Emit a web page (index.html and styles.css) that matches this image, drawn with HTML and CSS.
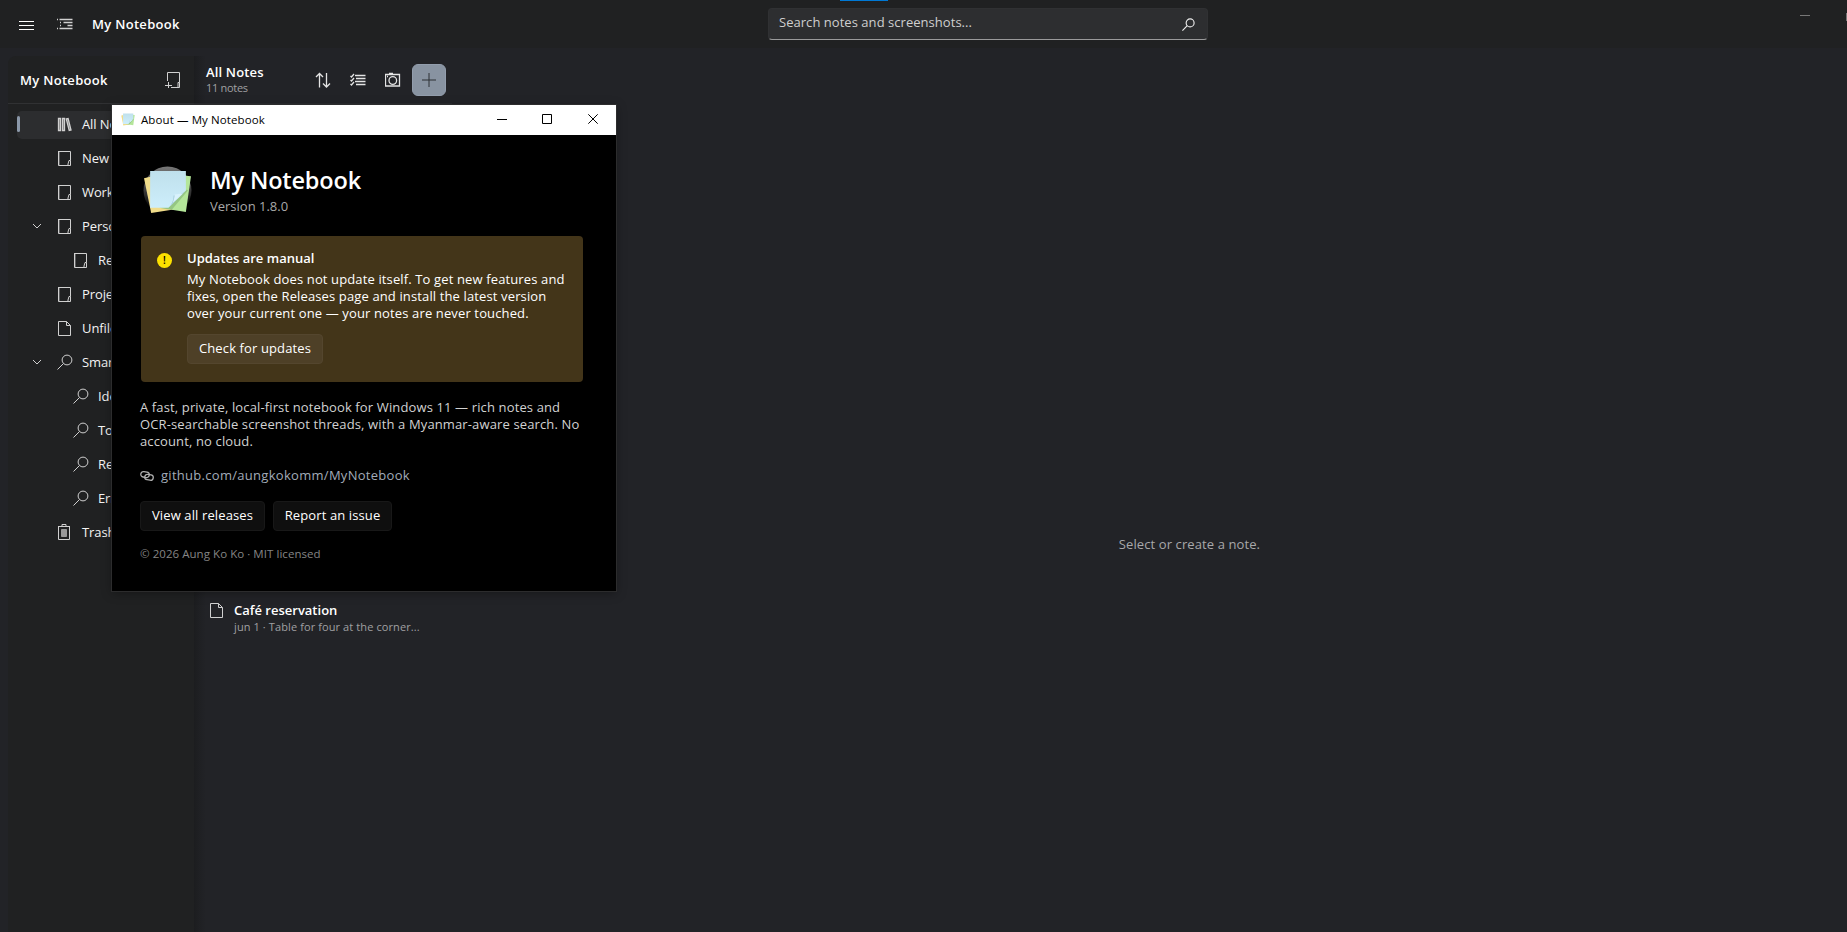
FILE: index.html
```html
<!DOCTYPE html>
<html lang="en">
<head>
    <meta charset="UTF-8">
    <meta name="viewport" content="width=device-width, initial-scale=1.0">
    <title>My Notebook</title>
    <link rel="stylesheet" href="styles.css">
</head>
<body>
    <svg class="sprite" width="0" height="0">
        <defs>
            <linearGradient id="disc" x1="0" y1="0" x2="0" y2="1"><stop offset="0" stop-color="#777"/><stop offset=".5" stop-color="#3a3a3a"/><stop offset=".9" stop-color="#000"/></linearGradient>
            <linearGradient id="sheet" x1="0" y1="0" x2="0" y2="1"><stop offset="0" stop-color="#bfe0ec"/><stop offset="1" stop-color="#cdeefb"/></linearGradient>
        </defs>
        <symbol id="book" viewBox="0 0 16 16"><path d="M1.500 1.500h12v9M1.500 1v14.500h9.500M13.500 10.500v5h-2.500v-1.500l1-3.500z"/><path d="M2.500 2v13" stroke-opacity=".35"/></symbol>
        <symbol id="page" viewBox="0 0 16 16"><path d="M1.500 1.500v14h12V5.500L9.500 1.500zM9.500 1.500v4h4"/></symbol>
        <symbol id="search" viewBox="0 0 16 16"><circle cx="10" cy="6" r="4.900"/><path d="M6.500 9.500L.5 15.500"/></symbol>
        <symbol id="chevron" viewBox="0 0 10 10"><path d="M1 3l4 4 4-4"/></symbol>
        <symbol id="notes" viewBox="0 0 48 48">
            <path d="M1 12l8-2 24 32-25 4z" fill="#f0dc8a"/>
            <path d="M38 9l9 1-5 35-26-4z" fill="#b4e69a"/>
            <path d="M44 24L28 43l-12-2 10-1 17-17z" fill="#5d8a5a" fill-opacity=".35"/>
            <path d="M7 5h35v19L25 41H7z" fill="url(#sheet)"/>
            <path d="M42 24L25 41c3-3 5-7 5-12 5 0 9-2 12-5z" fill="#a3cbd8"/>
            <path d="M31 28l8-1c-3 3-7 7-10 9 1-2 2-5 2-8z" fill="#d9f2fc"/>
        </symbol>
    </svg>

    <header class="titlebar">
        <svg class="icon menu" viewBox="0 0 16 12"><path d="M0 1.500h15M0 5.500h15M0 9.500h15"/></svg>
        <svg class="icon outline" viewBox="0 0 16 12"><path d="M2.500 1.500h13M6.500 4.500h9M10.500 7.500h5M2.500 10.500h13M0 1.500h1M0 10.500h1M3 4.500h1M3 7.500h1"/></svg>
        <span class="app-name">My Notebook</span>
        <div class="search">
            <span class="search-text">Search notes and screenshots...</span>
            <svg class="icon search-icon"><use href="#search"/></svg>
        </div>
        <span class="snap"></span>
        <span class="min"></span>
        <span class="max"></span>
    </header>

    <main class="content">
        <nav class="sidebar">
            <div class="side-head">
                <span class="side-title">My Notebook</span>
                <svg class="icon" viewBox="0 0 16 16"><path d="M2.500 9V.5h12v10M6 15.500h8.500v-5h-1.500v5M3.500 10v6M0 13.500h7"/></svg>
            </div>
            <div class="row selected"><span class="marker"></span><span class="chev"></span><svg class="icon library" viewBox="0 0 16 16"><path d="M1.500 2.500h2v12h-2zM5.500 2.500h2v12h-2zM9.300 3l1.800-.5 2.900 11.500-1.800.5z"/></svg><span class="label">All Notes</span></div>
            <div class="row"><span class="chev"></span><svg class="icon"><use href="#book"/></svg><span class="label">New</span></div>
            <div class="row"><span class="chev"></span><svg class="icon"><use href="#book"/></svg><span class="label">Work</span></div>
            <div class="row"><svg class="chev"><use href="#chevron"/></svg><svg class="icon"><use href="#book"/></svg><span class="label">Personal</span></div>
            <div class="row child"><span class="chev"></span><svg class="icon"><use href="#book"/></svg><span class="label">Recipes</span></div>
            <div class="row"><span class="chev"></span><svg class="icon"><use href="#book"/></svg><span class="label">Projects</span></div>
            <div class="row"><span class="chev"></span><svg class="icon"><use href="#page"/></svg><span class="label">Unfiled</span></div>
            <div class="row"><svg class="chev"><use href="#chevron"/></svg><svg class="icon"><use href="#search"/></svg><span class="label">Smart</span></div>
            <div class="row child"><span class="chev"></span><svg class="icon"><use href="#search"/></svg><span class="label">Ideas</span></div>
            <div class="row child"><span class="chev"></span><svg class="icon"><use href="#search"/></svg><span class="label">To do</span></div>
            <div class="row child"><span class="chev"></span><svg class="icon"><use href="#search"/></svg><span class="label">Recent</span></div>
            <div class="row child"><span class="chev"></span><svg class="icon"><use href="#search"/></svg><span class="label">Errors</span></div>
            <div class="row"><span class="chev"></span><svg class="icon" viewBox="0 0 16 16"><path d="M1 2.500h12M5 2V.5h4V2M1.500 3v12.500h11V3"/><path d="M4.500 5.500h5v7h-5z" fill="#999" stroke="#999"/></svg><span class="label">Trash</span></div>
        </nav>

        <section class="notes">
            <div class="notes-head">
                <div class="notes-title">
                    <h2>All Notes</h2>
                    <p>11 notes</p>
                </div>
                <svg class="icon" viewBox="0 0 16 16"><path d="M4.500 15.500V1.500M1 5l3.500-3.500L8 5M11.500 1v14M8 11.500l3.500 3.500 3.500-3.500"/></svg>
                <svg class="icon" viewBox="0 0 16 16"><path d="M5 3.500h10.500M6 6.500h9.500M5 9.500h10.500M6 12.500h9.500M.5 4l1 1L4 2M.5 8l1 1L4 6M.5 12l1 1L4 10"/></svg>
                <svg class="icon" viewBox="0 0 16 16"><path d="M.5 2.500h14v11.500H.5zM2 4.500h1M4 1.500h4"/><circle cx="7.800" cy="8.500" r="3.800"/></svg>
                <button class="add"><svg viewBox="0 0 14 14"><path d="M7 0v14M0 7h14"/></svg></button>
            </div>
            <div class="note">
                <svg class="icon"><use href="#page"/></svg>
                <div>
                    <h3>Café reservation</h3>
                    <p>jun 1 · Table for four at the corner...</p>
                </div>
            </div>
        </section>

        <section class="editor"><p class="empty">Select or create a note.</p></section>
    </main>

    <div class="dialog">
        <div class="dialog-bar">
            <svg class="small-logo"><use href="#notes"/></svg>
            <span class="dialog-title">About — My Notebook</span>
            <svg class="win-btn" viewBox="0 0 10 10"><path d="M0 5.500h10"/></svg>
            <svg class="win-btn" viewBox="0 0 10 10"><path d="M.5.5h9v9h-9z"/></svg>
            <svg class="win-btn" viewBox="0 0 10 10"><path d="M.3.3l9.400 9.400M9.700.3L.3 9.700"/></svg>
        </div>
        <div class="dialog-body">
            <div class="brand">
                <svg class="logo" viewBox="0 0 48 48"><circle cx="24" cy="24" r="23.500" fill="url(#disc)"/><use href="#notes"/></svg>
                <div>
                    <h1>My Notebook</h1>
                    <p class="version">Version 1.8.0</p>
                </div>
            </div>
            <div class="warning">
                <span class="badge">!</span>
                <div>
                    <h4>Updates are manual</h4>
                    <p class="warn-text">My Notebook does not update itself. To get new features and<br>fixes, open the Releases page and install the latest version<br>over your current one — your notes are never touched.</p>
                    <button class="btn check">Check for updates</button>
                </div>
            </div>
            <p class="about">A fast, private, local-first notebook for Windows 11 — rich notes and<br>OCR-searchable screenshot threads, with a Myanmar-aware search. No<br>account, no cloud.</p>
            <div class="link">
                <svg viewBox="0 0 14 10"><rect x=".7" y=".9" width="8.500" height="5.400" rx="2.700" transform="rotate(10 5 4)"/><rect x="4.800" y="3.600" width="8.500" height="5.400" rx="2.700" transform="rotate(10 9 6)"/></svg>
                <span class="link-text">github.com/aungkokomm/MyNotebook</span>
            </div>
            <div class="buttons">
                <button class="btn releases">View all releases</button>
                <button class="btn issue">Report an issue</button>
            </div>
            <p class="copyright">© 2026 Aung Ko Ko · MIT licensed</p>
        </div>
    </div>
</body>
</html>
```
FILE: styles.css
```css
* {
    box-sizing: border-box;
}
body {
    margin: 0;
    height: 932px;
    overflow: hidden;
    position: relative;
    display: flex;
    flex-direction: column;
    background: #222327;
    color: #fff;
    font-family: "Open Sans", "Noto Sans", sans-serif;
    font-size: 13px;
    line-height: 17px;
    letter-spacing: .1px;
}
h1, h2, h3, h4, p {
    margin: 0;
    white-space: nowrap;
}
span {
    white-space: nowrap;
}
svg {
    fill: none;
    stroke: #d0d0d0;
    flex: none;
}
.sprite {
    position: absolute;
}
.icon {
    width: 16px;
    height: 16px;
}
.titlebar {
    height: 48px;
    background: #202122;
    display: flex;
    flex: none;
    position: relative;
}
.menu {
    height: 12px;
    margin: 20px 0 0 19px;
    stroke: #fff;
}
.outline {
    height: 12px;
    margin: 18px 0 0 22px;
    stroke-width: 1.4;
}
.app-name {
    width: 676px;
    margin: 16px 0 0 19px;
    font-weight: 600;
    letter-spacing: .3px;
}
.search {
    width: 440px;
    height: 32px;
    margin-top: 8px;
    padding: 0 12px 0 10px;
    display: flex;
    justify-content: space-between;
    background: #2d2e30;
    border: 1px solid #303133;
    border-bottom-color: #9a9a9b;
    border-radius: 4px;
    color: #cfcfcf;
}
.search-text {
    margin-top: 5px;
    letter-spacing: .04px;
}
.search-icon {
    width: 13px;
    height: 13px;
    margin-top: 9px;
    stroke: #eee;
    stroke-width: 1.4;
}
.snap {
    position: absolute;
    left: 840px;
    top: 0;
    width: 48px;
    height: 1px;
    background: #0078d4;
}
.min {
    position: absolute;
    right: 37px;
    top: 15px;
    width: 10px;
    height: 1px;
    background: #777;
}
.max {
    position: absolute;
    right: 0;
    top: 13px;
    width: 1px;
    height: 8px;
    background: #777;
}
.content {
    flex: 1;
    display: flex;
    padding: 8px 0 0 8px;
}
.sidebar {
    width: 186px;
    background: #202122;
    border-top-left-radius: 8px;
}
.side-head {
    height: 48px;
    padding: 1px 13px 0 12px;
    display: flex;
    align-items: center;
    justify-content: space-between;
    border-bottom: 1px solid #303133;
    font-weight: 600;
    letter-spacing: .3px;
}
.row {
    height: 28px;
    margin: 6px 0 0 9px;
    padding-bottom: 2px;
    display: flex;
    align-items: center;
    color: #f4f4f4;
    border-radius: 5px;
}
.row.selected {
    margin-top: 7px;
    background: #2c2d2f;
}
.marker {
    width: 3px;
    height: 16px;
    background: #8b98a9;
    border-radius: 2px;
}
.row.selected .chev {
    margin-left: 12px;
}
.row .icon {
    margin-right: 9px;
}
.row.child .icon {
    margin-left: 16px;
}
.library {
    stroke-width: 1.3;
    fill: #777;
}
.label {
    letter-spacing: -.1px;
}
.chev {
    width: 10px;
    height: 10px;
    margin: 0 15px 0 15px;
}
.notes {
    width: 258px;
    background: linear-gradient(to right, #1c1d1f 0, #1f2023 5px, #222327 12px);
}
.notes-head {
    height: 48px;
    padding: 0 6px 0 12px;
    display: flex;
    align-items: center;
    border-bottom: 1px solid #2a2b2e;
}
.notes-title {
    width: 109px;
}
.notes-head h2, .note h3 {
    font-size: 13px;
    font-weight: 600;
}
.notes-head h2 {
    letter-spacing: .16px;
}
.note h3 {
    letter-spacing: 0;
}
.notes-head p, .note p {
    font-size: 11px;
    line-height: 15px;
    letter-spacing: .1px;
    color: #a0a0a2;
}
.notes-head p {
    line-height: 14px;
    letter-spacing: -.3px;
}
.notes-head .icon {
    margin-right: 19px;
    stroke: #e4e4e4;
    stroke-width: 1.3;
}
.notes-head .icon:nth-of-type(3) {
    margin-right: 11px;
}
.add {
    width: 34px;
    height: 32px;
    padding: 0;
    display: flex;
    align-items: center;
    justify-content: center;
    background: #8893a1;
    border: 1px solid #929dac;
    border-radius: 6px;
}
.add svg {
    width: 14px;
    height: 14px;
    stroke: #2c3035;
}
.note {
    display: flex;
    gap: 9px;
    margin: 498px 0 0 15px;
}
.editor {
    flex: 1;
    text-align: center;
}
.empty {
    margin-top: 480px;
    padding-left: 80px;
    color: #a8a8aa;
}
.dialog {
    position: absolute;
    left: 112px;
    top: 105px;
    width: 504px;
    height: 486px;
    background: #000;
    box-shadow: 0 0 0 1px #2c2c2d, 0 2px 10px rgba(0, 0, 0, .35);
}
.dialog-bar {
    height: 30px;
    padding: 0 0 2px 9px;
    display: flex;
    align-items: center;
    background: #fff;
    color: #000;
    font-size: 11.5px;
}
.small-logo {
    width: 14px;
    height: 14px;
    stroke: none;
}
.dialog-title {
    flex: none;
    width: 356px;
    margin-left: 6px;
}
.win-btn {
    width: 10px;
    height: 10px;
    margin-right: 35px;
    stroke: #000;
}
.win-btn + .win-btn {
    margin-right: 36px;
}
.win-btn:last-child {
    margin-right: 18px;
}
.dialog-body {
    padding: 31px 28px 0;
}
.brand {
    display: flex;
    height: 70px;
}
.logo {
    width: 49px;
    height: 49px;
    margin: 0 0 0 3px;
    stroke: none;
}
.brand div {
    margin-left: 18px;
}
.brand h1 {
    font-size: 23.5px;
    line-height: 29px;
    font-weight: 600;
    letter-spacing: -.15px;
}
.version {
    margin-top: 3px;
    color: #a8a8a8;
    letter-spacing: 0;
}
.warning {
    width: 442px;
    height: 146px;
    margin-left: 1px;
    padding: 14px 16px;
    display: flex;
    background: #433519;
    border-radius: 4px;
}
.badge {
    width: 15px;
    height: 15px;
    margin: 3px 15px 0 0;
    background: #fce100;
    border-radius: 50%;
    color: #000;
    font-size: 10px;
    font-weight: 600;
    line-height: 15px;
    text-align: center;
}
.warning h4 {
    font-size: 13px;
    font-weight: 600;
    letter-spacing: 0;
}
.warn-text {
    margin-top: 4px;
    letter-spacing: .13px;
}
.btn {
    height: 30px;
    padding: 0 0 2px;
    font-family: inherit;
    font-size: 13px;
    line-height: 17px;
    letter-spacing: .12px;
    color: #fff;
    white-space: nowrap;
    background: #0f0f0f;
    border: 1px solid #181818;
    border-radius: 4px;
}
.check {
    width: 136px;
    margin-top: 12px;
    background: #4e4027;
    border-color: #54462e;
}
.about {
    margin-top: 17px;
    color: #d2d2d2;
    letter-spacing: .13px;
}
.link {
    display: flex;
    align-items: center;
    gap: 7px;
    margin-top: 17px;
    color: #a2abb8;
    letter-spacing: .29px;
}
.link svg {
    width: 14px;
    height: 10px;
    stroke: #b0b0b0;
    stroke-width: 1.3;
}
.buttons {
    display: flex;
    gap: 8px;
    margin-top: 17px;
}
.releases {
    width: 125px;
}
.issue {
    width: 119px;
}
.copyright {
    margin-top: 14px;
    font-size: 11.5px;
    letter-spacing: .05px;
    color: #858585;
}
```
